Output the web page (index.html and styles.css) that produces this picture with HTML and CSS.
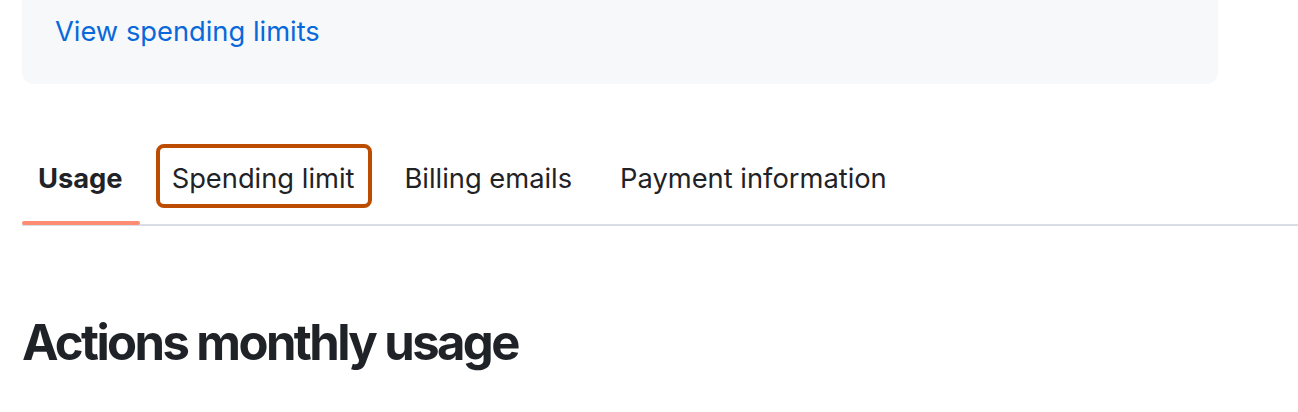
FILE: index.html
```html
<html>
<head>
<title>Billing - Actions usage</title>
<link rel="stylesheet" href="styles.css">
</head>
<body>
<div class="page">
	<div class="limits-box">
		<a class="limits-link" href="#">View spending limits</a>
	</div>
	<nav class="tabs">
		<a class="tab tab-active" href="#">Usage</a>
		<a class="tab tab-marked" href="#">Spending limit</a>
		<a class="tab" href="#">Billing emails</a>
		<a class="tab" href="#">Payment information</a>
	</nav>
	<h2 class="section-title">Actions monthly usage</h2>
</div>
</body>
</html>
```

FILE: styles.css
```css
html {
	background: #fff;
}
body {
	margin: 0;
	font-family: "Inter", "Noto Sans", sans-serif;
	color: #1f2328;
	overflow: hidden;
}
.page {
	padding-left: 22px;
}
.limits-box {
	width: 1196px;
	box-sizing: border-box;
	margin-top: -24px;
	padding: 35px 33px 31px;
	background: #f6f8fa;
	border-radius: 12px;
}
.limits-link {
	display: block;
	font-size: 27.3px;
	line-height: 42px;
	color: #0969da;
	text-decoration: none;
}
.tabs {
	position: relative;
	display: flex;
	align-items: center;
	gap: 16px;
	height: 96px;
	margin-top: 44px;
	border-bottom: 2px solid #d8dee4;
}
.tab {
	position: relative;
	display: flex;
	align-items: center;
	box-sizing: border-box;
	height: 64px;
	padding: 4px 16px 0;
	font-size: 27.3px;
	color: #1f2328;
	text-decoration: none;
	border-radius: 8px;
}
.tab:first-child {
	padding-right: 17px;
}
.tab-active {
	font-weight: 700;
}
.tab-active::after {
	content: "";
	position: absolute;
	left: 0;
	right: 0;
	bottom: -17px;
	height: 4px;
	background: #fd8c73;
	border-radius: 4px;
}
.tab-marked {
	padding-right: 18px;
	outline: 4px solid #bc4c00;
	outline-offset: -4px;
}
.section-title {
	margin: 86px 0 0;
	font-size: 49px;
	line-height: 62px;
	font-weight: 700;
	letter-spacing: -2.6px;
}
```
